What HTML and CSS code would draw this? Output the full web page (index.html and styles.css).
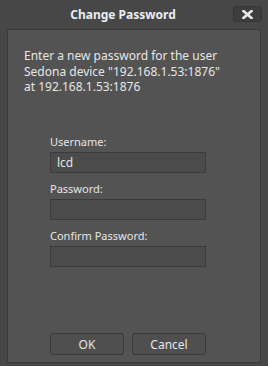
FILE: index.html
```html
<!DOCTYPE html>
<html lang="en">
<head>
  <meta charset="UTF-8" />
  <title>Change Password</title>
  <link rel="stylesheet" href="styles.css">
</head>
<body>
  <div class="dialog">
    <div class="titlebar">
      <h1>Change Password</h1>
      <button class="close" aria-label="Close">
        <svg width="11" height="9" viewBox="0 0 11 9">
          <path d="M1.5 1 L9.5 8 M9.5 1 L1.5 8" stroke="#e8e8e8" stroke-width="2.6" stroke-linecap="square" fill="none"/>
        </svg>
      </button>
    </div>

    <div class="panel">
      <p class="message">
        Enter a new password for the user<br>
        Sedona device "192.168.1.53:1876"<br>
        at 192.168.1.53:1876
      </p>

      <div class="form">
        <label for="user">Username:</label>
        <input type="text" id="user" value="lcd" />
        <label for="pass">Password:</label>
        <input type="password" id="pass" />
        <label for="confirm">Confirm Password:</label>
        <input type="password" id="confirm" />
      </div>

      <div class="actions">
        <button class="btn">OK</button>
        <button class="btn">Cancel</button>
      </div>
    </div>
  </div>
</body>
</html>
```

FILE: styles.css
```css
:root {
  --outer: #474747;
  --panel: #535353;
  --field: #4b4b4b;
  --line: #3b3b3b;
  --text: #e6e6e6;
}

* {
  box-sizing: border-box;
}

body {
  margin: 0;
  background: var(--outer);
  font-family: 'Noto Sans', sans-serif;
  color: var(--text);
}

.dialog {
  height: 366px;
  display: flex;
  flex-direction: column;
}

.titlebar {
  height: 29px;
  display: flex;
  align-items: center;
  padding: 0 6px 0 7px;
}

.titlebar h1 {
  flex: 1;
  margin: 0 0 0 6px;
  font-size: 12px;
  font-weight: 700;
  text-align: center;
  color: #e9eef4;
}

.close {
  width: 29px;
  height: 16px;
  margin-top: -1px;
  padding: 0;
  border: 1px solid #363636;
  border-radius: 3px;
  background: #3e3e3e;
  display: flex;
  align-items: center;
  justify-content: center;
}

.panel {
  flex: 1;
  margin: 0 7px 3px;
  border: 1px solid var(--line);
  background: var(--panel);
  display: flex;
  flex-direction: column;
  padding: 0 0 7px;
}

.message {
  margin: 18px 0 0 16px;
  font-size: 12px;
  line-height: 15.5px;
}

.form {
  margin: 39px 0 0 42px;
  width: 156px;
  display: flex;
  flex-direction: column;
}

.form label {
  font-size: 11px;
  line-height: 16px;
  margin-bottom: 2px;
}

.form input {
  height: 21px;
  margin: 0 0 8px;
  padding: 0 6px;
  border: 1px solid var(--line);
  background: var(--field);
  color: var(--text);
  font: 12px 'Noto Sans', sans-serif;
}

.actions {
  margin: auto 0 0 42px;
  display: flex;
  gap: 8px;
}

.btn {
  width: 74px;
  height: 22px;
  border: 1px solid #3c3c3c;
  border-radius: 3px;
  background: #4f4f4f;
  color: var(--text);
  font: 12px 'Noto Sans', sans-serif;
}
```
